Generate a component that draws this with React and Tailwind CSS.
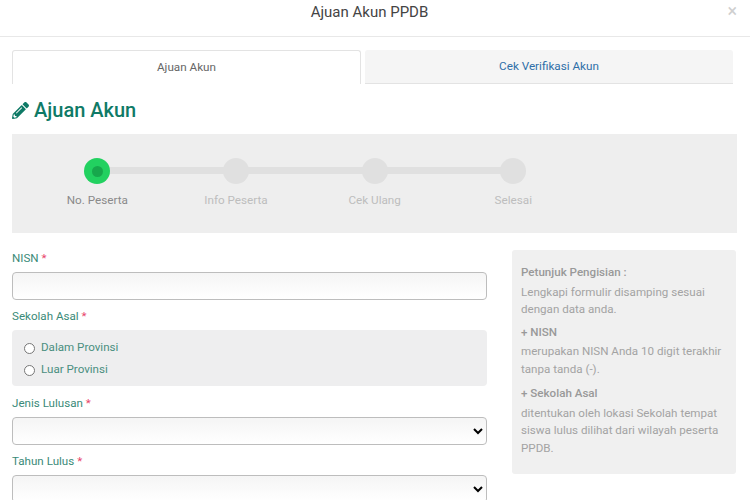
import { FaPencilAlt } from 'react-icons/fa'

// Satu langkah pada stepper
function Step({ label, active }) {
  return (
    <div className="flex flex-col items-center w-[138.67px] relative">
      {active ? (
        <div className="w-[26px] h-[26px] rounded-full bg-[#22d160] flex items-center justify-center">
          <div className="w-[11px] h-[11px] rounded-full bg-[#17a84c]" />
        </div>
      ) : (
        <div className="w-[26px] h-[26px] rounded-full bg-[#e0e0e0]" />
      )}
      <span className={`mt-[7px] text-[11.7px] leading-[18px] ${active ? 'text-[#8a8a8a]' : 'text-[#bdbdbd]'}`}>{label}</span>
    </div>
  )
}

function Label({ children, className = '' }) {
  return (
    <label className={`block text-[11.6px] leading-[14px] text-[#3a8a78] ${className}`}>
      {children} <span className="text-[#e8456b]">*</span>
    </label>
  )
}

function Radio({ label }) {
  return (
    <label className="flex items-center gap-[6px] h-[22px] text-[11.6px] text-[#4a8f7f]">
      <span className="w-[11px] h-[11px] rounded-full border border-[#777] bg-white ml-[12px]" />
      {label}
    </label>
  )
}

const fieldClass =
  'block w-full rounded border border-[#bdbdbd] bg-gradient-to-b from-[#f5f5f5] to-white text-xs'

export default function App() {
  const selectClass = `${fieldClass} h-[28px]`
  return (
    <div className="w-[750px] h-[500px] overflow-hidden bg-white font-['Roboto',sans-serif]">
      {/* header modal */}
      <div className="relative h-[37px] border-b border-[#e8e8e8] flex justify-center pr-[11px]">
        <h1 className="text-[15px] leading-[24px] text-[#444] font-normal">Ajuan Akun PPDB</h1>
        <span className="absolute right-[13px] top-0 text-[18px] leading-[21px] text-[#cfcfcf]">×</span>
      </div>

      <div className="pl-[12px] pr-[13px]">
        {/* tab */}
        <div className="flex gap-[4px] mt-[13px] pr-[4px]">
          <div className="w-[349px] h-[34px] bg-white border border-b-0 border-[#e3e3e3] rounded-t-[3px] flex items-center justify-center text-[11.7px] text-[#666]">
            Ajuan Akun
          </div>
          <div className="flex-1 h-[34px] bg-[#f5f5f5] border-b border-[#e3e3e3] rounded-t-[3px] flex items-center justify-center text-[11.7px] text-[#2f6fa8]">
            Cek Verifikasi Akun
          </div>
        </div>

        <h2 className="flex items-center gap-[5px] mt-[12px] h-[28px] text-[20px] font-medium text-[#0f7a66]">
          <FaPencilAlt className="text-[17px]" />
          Ajuan Akun
        </h2>

        {/* stepper */}
        <div className="relative mt-[10px] h-[99px] bg-[#eeeeee] pt-[24px] pl-[16px] flex">
          <div className="absolute left-[85px] top-[33px] w-[416px] h-[7px] bg-[#e0e0e0]" />
          <Step label="No. Peserta" active />
          <Step label="Info Peserta" />
          <Step label="Cek Ulang" />
          <Step label="Selesai" />
        </div>

        <div className="flex mt-[17px]">
          {/* form */}
          <div className="w-[475px]">
            <Label className="pt-[1px]">NISN</Label>
            <input className={`${fieldClass} h-[28px] mt-[7px]`} />
            <Label className="mt-[9px]">Sekolah Asal</Label>
            <div className="mt-[7px] h-[56px] rounded bg-[#eeeeef] py-[7px]">
              <Radio label="Dalam Provinsi" />
              <Radio label="Luar Provinsi" />
            </div>
            <Label className="mt-[10px]">Jenis Lulusan</Label>
            <select className={`${selectClass} mt-[7px]`} />
            <Label className="mt-[9px]">Tahun Lulus</Label>
            <select className={`${selectClass} mt-[7px]`} />
          </div>

          {/* petunjuk */}
          <aside className="ml-[25px] w-[224px] h-[224px] rounded-[3px] bg-[#f0f0f0] px-[9px] pt-[14px] text-[11.6px] leading-[17.5px] text-[#a3a3a3]">
            <p className="font-medium text-[#999]">Petunjuk Pengisian :</p>
            <p className="mt-[2px]">Lengkapi formulir disamping sesuai dengan data anda.</p>
            <p className="mt-[5px] font-medium text-[#999]">+ NISN</p>
            <p className="mt-[2px]">merupakan NISN Anda 10 digit terakhir tanpa tanda (-).</p>
            <p className="mt-[7px] font-medium text-[#999]">+ Sekolah Asal</p>
            <p className="mt-[2px]">ditentukan oleh lokasi Sekolah tempat siswa lulus dilihat dari wilayah peserta PPDB.</p>
          </aside>
        </div>
      </div>
    </div>
  )
}
